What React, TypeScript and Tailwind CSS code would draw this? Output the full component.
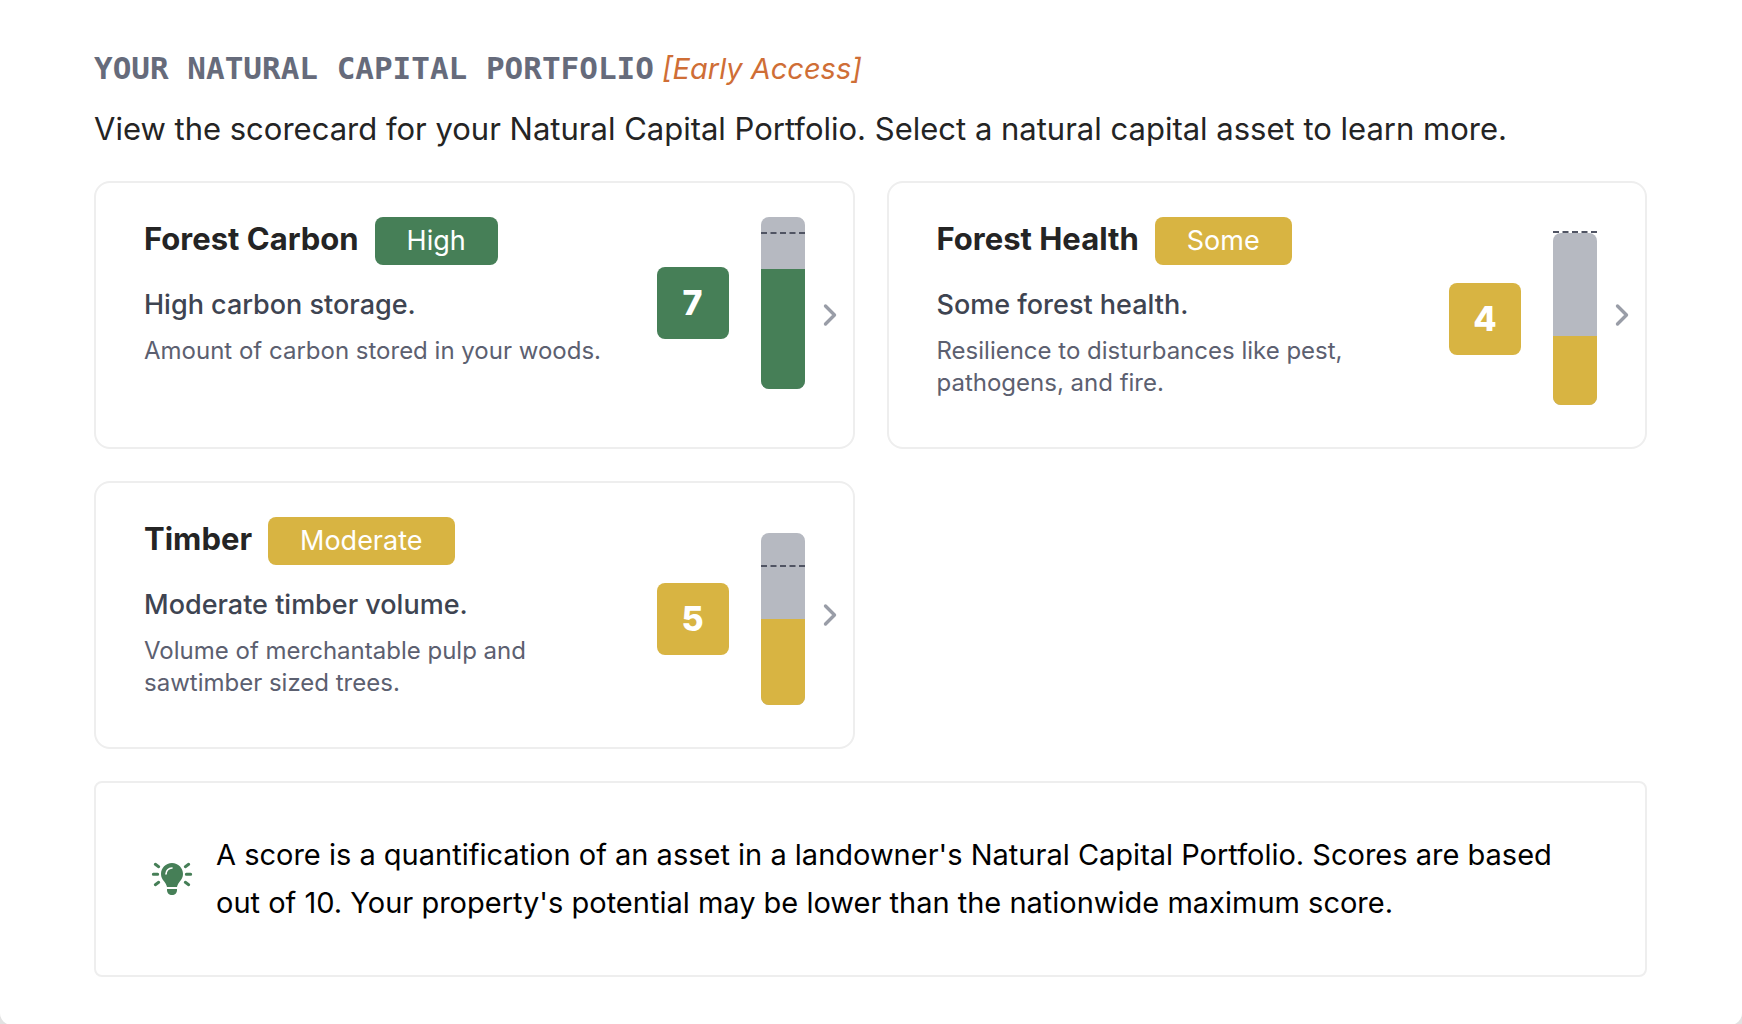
import React from 'react';
import { ChevronRight } from 'lucide-react';

const assets = [
  {
    id: 'forest-carbon',
    name: 'Forest Carbon',
    level: 'High',
    summary: 'High carbon storage.',
    description: 'Amount of carbon stored in your woods.',
    score: 7,
    potential: 9,
    color: 'bg-[#467f57]',
  },
  {
    id: 'forest-health',
    name: 'Forest Health',
    level: 'Some',
    summary: 'Some forest health.',
    description: 'Resilience to disturbances like pest, pathogens, and fire.',
    score: 4,
    potential: 10,
    color: 'bg-[#d8b442]',
  },
  {
    id: 'timber',
    name: 'Timber',
    level: 'Moderate',
    summary: 'Moderate timber volume.',
    description: 'Volume of merchantable pulp and sawtimber sized trees.',
    score: 5,
    potential: 8,
    color: 'bg-[#d8b442]',
  },
];

type Asset = (typeof assets)[number];

const ScoreBar = ({ score, potential, color }: Asset) => (
  <div className="relative h-[172px] w-11 shrink-0">
    <div className="flex h-full flex-col justify-end overflow-hidden rounded-lg bg-[#b6b9c1]">
      <div className={color} style={{ height: `${score * 10}%` }} />
    </div>
    {/* Highest score the property can reach */}
    <div
      className="absolute inset-x-0 border-t-2 border-dashed border-[#505463]"
      style={{ bottom: `${potential * 10}%` }}
    />
  </div>
);

const AssetCard = (asset: Asset) => (
  <a
    href={`#${asset.id}`}
    className="flex items-center rounded-2xl border-2 border-[#eeeeee] bg-white pr-[5px] pl-12"
  >
    <div className="flex flex-1 items-center self-start pt-[34px] pb-[26px]">
      <div className="flex-1 pr-8 pb-[22px]">
        <div className="flex items-start gap-4">
          <h2 className="text-[31px] leading-[44px] font-bold text-[#242424]">{asset.name}</h2>
          <span className={`rounded-lg px-8 text-[27px] leading-[48px] text-white ${asset.color}`}>
            {asset.level}
          </span>
        </div>
        <p className="mt-5 text-[27px] leading-10 font-medium text-[#3e4451]">{asset.summary}</p>
        <p className="mt-2.5 text-[24px] leading-8 text-[#5c6070]">{asset.description}</p>
      </div>
      <div
        className={`mr-8 size-[72px] shrink-0 rounded-lg text-center text-[34px] leading-[72px] font-extrabold text-white ${asset.color}`}
      >
        {asset.score}
      </div>
      <ScoreBar {...asset} />
    </div>
    <ChevronRight className="ml-[7px] size-9 shrink-0 text-[#999da7]" strokeWidth={2.25} />
  </a>
);

const BulbIcon = () => (
  <svg viewBox="12 15 168 168" className="size-14 shrink-0" fill="none" aria-hidden="true">
    <path
      d="M96 51c-19 0-33 15-33 33 0 9 4 16 9 22 4 5 7 10 9 17h30c2-7 5-12 9-17 5-6 9-13 9-22 0-18-14-33-33-33z"
      fill="#467f57"
    />
    <path d="M81 129h30v3c0 9-6 15-15 15s-15-6-15-15z" fill="#467f57" />
    <path d="M78 84c0-10 8-18 18-18" stroke="#ffffff" strokeWidth="5" strokeLinecap="round" />
    <path
      d="M40 85h13M139 85h13M46 55l10 7M146 55l-10 7M46 116l10-7M146 116l-10-7"
      stroke="#467f57"
      strokeWidth="9"
      strokeLinecap="round"
    />
  </svg>
);

export default function App() {
  return (
    <div className="flex min-h-screen flex-col bg-[#e2e2e2] font-['Inter',sans-serif]">
      <main className="flex-1 rounded-b-xl bg-white pt-12 pr-[95px] pb-12 pl-[94px]">
        <div className="flex items-baseline gap-2">
          <h1 className="font-['DejaVu_Sans_Mono',monospace] text-[31px] leading-10 font-bold text-[#666b7b] uppercase">
            Your Natural Capital Portfolio
          </h1>
          <em className="text-[29px] leading-10 text-[#cf6e36]">[Early Access]</em>
        </div>
        <p className="mt-4 text-[31px] leading-[48px] text-[#242424]">
          View the scorecard for your Natural Capital Portfolio. Select a natural capital asset to learn more.
        </p>

        <div className="mt-7 grid grid-cols-2 gap-8">
          {assets.map((asset) => (
            <AssetCard key={asset.id} {...asset} />
          ))}
        </div>

        <div className="mt-8 flex items-center gap-4 rounded-lg border-2 border-[#eeeeee] p-12">
          <BulbIcon />
          <p className="text-[29px] leading-[48px] text-black">
            A score is a quantification of an asset in a landowner's Natural Capital Portfolio. Scores are based
            out of 10. Your property's potential may be lower than the nationwide maximum score.
          </p>
        </div>
      </main>
    </div>
  );
}
